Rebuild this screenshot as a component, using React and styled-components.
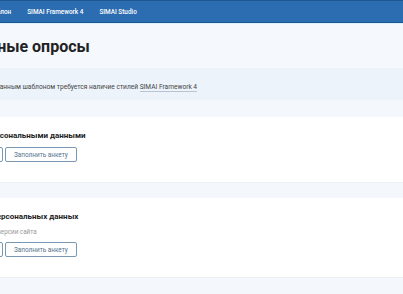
import React from "react";
import styled, { createGlobalStyle } from "styled-components";

const GlobalStyle = createGlobalStyle`
  html, body {
    margin: 0;
    padding: 0;
    background: #f4f7fb;
    overflow: hidden;
  }
  body {
    font-family: Roboto, "Liberation Sans", Arial, sans-serif;
    color: #222;
  }
`;

const polls = [
  {
    title: "Опрос с персональными данными",
    note: null,
    shift: 45,
  },
  {
    title: "Опрос без персональных данных",
    note: "Для мобильной версии сайта",
    shift: 48,
  },
];

function App() {
  return (
    <Page>
      <GlobalStyle />
      <Nav>
        <NavInner>
          <NavItem>Главная</NavItem>
          <NavItem>Шаблон</NavItem>
          <NavItem>SIMAI Framework 4</NavItem>
          <NavItem>SIMAI Studio</NavItem>
        </NavInner>
      </Nav>

      <Header>
        <Inner $shift={48}>
          <Title>Анкетные опросы</Title>
        </Inner>
      </Header>

      <Notice>
        <Inner $shift={48}>
          Для работы с данным шаблоном требуется наличие стилей{" "}
          <NoticeLink>SIMAI Framework 4</NoticeLink>
        </Inner>
      </Notice>

      <List>
        {polls.map((p) => (
          <Card key={p.title}>
            <Inner $shift={p.shift}>
              <CardTitle>{p.title}</CardTitle>
            </Inner>
            {p.note && (
              <Inner $shift={51}>
                <CardNote>{p.note}</CardNote>
              </Inner>
            )}
            <Inner $shift={48}>
              <Buttons>
                <Button>Подробнее</Button>
                <Button>Заполнить анкету</Button>
              </Buttons>
            </Inner>
          </Card>
        ))}
      </List>
    </Page>
  );
}

export default App;

const Page = styled.div`
  width: 403px;
  height: 294px;
  overflow: hidden;
`;

const Inner = styled.div`
  margin-left: -${(p) => p.$shift}px;
`;

const Nav = styled.nav`
  height: 21px;
  background: #2c6cb0;
  border-top: 1px solid #1f568f;
  border-bottom: 1px solid #1d5792;
  box-shadow: 0 1px 0 #dcf2fd;
  display: flex;
  align-items: center;
`;

const NavInner = styled.div`
  display: flex;
  gap: 16px;
  margin-left: -53px;
`;

const NavItem = styled.a`
  color: #fff;
  font-size: 6.4px;
  font-weight: 500;
  white-space: nowrap;
`;

const Header = styled.header`
  height: 44px;
  margin-top: 1px;
  background: #f5f8fc;
  display: flex;
  align-items: center;
`;

const Title = styled.h1`
  margin: 0;
  font-size: 16px;
  font-weight: 700;
  color: #222;
  white-space: nowrap;
  line-height: 1;
  margin-top: 2px;
`;

const Notice = styled.div`
  height: 32px;
  box-sizing: border-box;
  padding-top: 14px;
  background: #edf3fa;
  font-size: 6.6px;
  color: #444;
  white-space: nowrap;
  line-height: 10px;
`;

const NoticeLink = styled.span`
  color: #444;
  border-bottom: 1px solid #b9c4cf;
`;

const List = styled.div`
  padding-top: 17px;
  display: flex;
  flex-direction: column;
  gap: 15px;
`;

const Card = styled.div`
  background: #fff;
  padding: 14px 0 20px;
  border-bottom: 1px solid #eef0f3;
`;

const CardTitle = styled.div`
  font-size: 8px;
  font-weight: 700;
  line-height: 10px;
  color: #222;
  white-space: nowrap;
`;

const CardNote = styled.div`
  margin: 5px 0 -1px;
  font-size: 6.3px;
  line-height: 10px;
  color: #999;
  white-space: nowrap;
`;

const Buttons = styled.div`
  display: flex;
  gap: 2px;
  margin-top: 6px;
`;

const Button = styled.button`
  height: 15px;
  padding: 0 8px;
  border: 1px solid #7a98b3;
  border-radius: 2px;
  background: #fff;
  color: #56728c;
  font-family: inherit;
  font-size: 6.4px;
  white-space: nowrap;
  cursor: pointer;
`;
